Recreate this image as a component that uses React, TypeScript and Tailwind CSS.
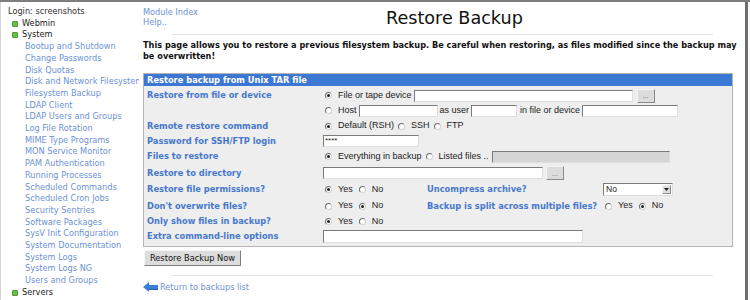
import React from 'react';

const dv = "font-['DejaVu_Sans',sans-serif]";
const lib = "font-['Liberation_Sans',Arial,sans-serif]";

const systemItems = [
  'Bootup and Shutdown',
  'Change Passwords',
  'Disk Quotas',
  'Disk and Network Filesystems',
  'Filesystem Backup',
  'LDAP Client',
  'LDAP Users and Groups',
  'Log File Rotation',
  'MIME Type Programs',
  'MON Service Monitor',
  'PAM Authentication',
  'Running Processes',
  'Scheduled Commands',
  'Scheduled Cron Jobs',
  'Security Sentries',
  'Software Packages',
  'SysV Init Configuration',
  'System Documentation',
  'System Logs',
  'System Logs NG',
  'Users and Groups',
];

const Radio = ({ on }: { on?: boolean }) => (
  <span className="relative inline-block w-[7px] h-[7px] shrink-0 rounded-full border border-t-[#6b6b6b] border-l-[#6b6b6b] border-r-[#d4d4d4] border-b-[#d4d4d4] bg-white">
    {on && <span className="absolute left-[1px] top-[1px] w-[3px] h-[3px] rounded-full bg-[#1f1f1f]" />}
  </span>
);

const Opt = ({ on, label, className = '' }: { on?: boolean; label: string; className?: string }) => (
  <span className={`flex items-center ${className}`}>
    <Radio on={on} />
    <span className="ml-[6px] whitespace-nowrap">{label}</span>
  </span>
);

const Field = ({ className = '', children }: { className?: string; children?: React.ReactNode }) => (
  <span
    className={`inline-flex items-center h-[12px] shrink-0 border border-t-[#7a7a7a] border-l-[#7a7a7a] border-r-[#dedede] border-b-[#dedede] ${className}`}
  >
    {children}
  </span>
);

const Dots = ({ className = '' }: { className?: string }) => (
  <span
    className={`inline-flex items-center justify-center w-[18px] h-[14px] shrink-0 bg-[#dcdcdc] border border-t-[#f4f4f4] border-l-[#f4f4f4] border-r-[#8a8a8a] border-b-[#8a8a8a] text-[7px] leading-none text-[#555] ${className}`}
  >
    ...
  </span>
);

const Label = ({ children, className = 'w-[176px]' }: { children: React.ReactNode; className?: string }) => (
  <span className={`shrink-0 font-bold text-[#4678cc] text-[8.3px] ${dv} whitespace-nowrap ${className}`}>{children}</span>
);

const Sidebar = () => (
  <div className={`w-[139px] shrink-0 h-full border-l border-[#d4d4d4] pt-[4px] pl-[7px] ${dv} text-[8.2px] leading-[11.7px] overflow-hidden`}>
    <div className="text-[#333]">Login: screenshots</div>
    <div className="flex items-center pl-[4px] text-[#222]">
      <span className="w-[6px] h-[6px] rounded-[1px] bg-[#6cbf4a] border border-[#4c9a33]" />
      <span className="ml-[4px]">Webmin</span>
    </div>
    <div className="flex items-center pl-[4px] text-[#222]">
      <span className="w-[6px] h-[6px] rounded-[1px] bg-[#6cbf4a] border border-[#4c9a33]" />
      <span className="ml-[4px]">System</span>
    </div>
    {systemItems.map((s) => (
      <div key={s} className="pl-[17px] text-[#6d92d6] whitespace-nowrap">
        {s}
      </div>
    ))}
    <div className="flex items-center pl-[4px] text-[#222]">
      <span className="w-[6px] h-[6px] rounded-[1px] bg-[#6cbf4a] border border-[#4c9a33]" />
      <span className="ml-[4px]">Servers</span>
    </div>
  </div>
);

const RestoreForm = () => (
  <div className="w-[590px] border border-[#b4b4b4] bg-[#eeeeee]">
    <div className={`h-[12px] bg-[#3c77d4] pl-[3px] flex items-center text-white font-bold text-[8.3px] ${dv}`}>
      Restore backup from Unix TAR file
    </div>
    <div className={`pt-[2px] pb-[2px] pl-[3px] text-[9px] text-[#222] ${lib}`}>
      {/* restore from */}
      <div className="h-[30px] flex">
        <div className="h-[15px] flex items-center">
          <Label>Restore from file or device</Label>
        </div>
        <div className="flex flex-col">
          <div className="h-[15px] flex items-center">
            <Opt on label="File or tape device" className="ml-[2px]" />
            <Field className="ml-[2px] w-[219px] bg-white" />
            <Dots className="ml-[4px]" />
          </div>
          <div className="h-[15px] flex items-center">
            <Opt label="Host" className="ml-[2px]" />
            <Field className="ml-[2px] w-[79px] bg-white" />
            <span className="ml-[2px] whitespace-nowrap">as user</span>
            <Field className="ml-[2px] w-[46px] bg-white" />
            <span className="ml-[3px] whitespace-nowrap">in file or device</span>
            <Field className="ml-[2px] w-[96px] bg-white" />
          </div>
        </div>
      </div>
      <div className="h-[16px] flex items-center">
        <Label>Remote restore command</Label>
        <Opt on label="Default (RSH)" className="ml-[2px]" />
        <Opt label="SSH" className="ml-[4px]" />
        <Opt label="FTP" className="ml-[4px]" />
      </div>
      <div className="h-[14px] flex items-center">
        <Label>Password for SSH/FTP login</Label>
        <Field className="w-[96px] bg-white pl-[1px] text-[8px] leading-none">****</Field>
      </div>
      <div className="h-[17px] flex items-center">
        <Label>Files to restore</Label>
        <Opt on label="Everything in backup" className="ml-[2px]" />
        <Opt label="Listed files .." className="ml-[4px]" />
        <Field className="ml-[3px] w-[178px] bg-[#d6d6d6]" />
      </div>
      <div className="h-[16px] flex items-center">
        <Label>Restore to directory</Label>
        <Field className="w-[220px] bg-white" />
        <Dots className="ml-[3px]" />
      </div>
      <div className="h-[17px] flex items-center">
        <Label>Restore file permissions?</Label>
        <div className="w-[104px] flex items-center">
          <Opt on label="Yes" className="ml-[2px]" />
          <Opt label="No" className="ml-[6px]" />
        </div>
        <Label className="w-[176px]">Uncompress archive?</Label>
        <span className="w-[70px] h-[13px] flex items-center bg-white border border-t-[#7a7a7a] border-l-[#7a7a7a] border-r-[#dedede] border-b-[#dedede]">
          <span className="flex-1 pl-[2px] text-[8.5px]">No</span>
          <span className="w-[9px] h-[9px] mr-[1px] flex items-center justify-center bg-[#dedede] border border-t-[#f4f4f4] border-l-[#f4f4f4] border-r-[#8a8a8a] border-b-[#8a8a8a]">
            <svg width="5" height="3" viewBox="0 0 5 3">
              <path d="M0 0h5L2.5 3z" fill="#222" />
            </svg>
          </span>
        </span>
      </div>
      <div className="h-[16px] flex items-center">
        <Label>Don't overwrite files?</Label>
        <div className="w-[104px] flex items-center">
          <Opt label="Yes" className="ml-[2px]" />
          <Opt on label="No" className="ml-[6px]" />
        </div>
        <Label className="w-[178px]">Backup is split across multiple files?</Label>
        <Opt label="Yes" />
        <Opt on label="No" className="ml-[6px]" />
      </div>
      <div className="h-[15px] flex items-center">
        <Label>Only show files in backup?</Label>
        <Opt on label="Yes" className="ml-[2px]" />
        <Opt label="No" className="ml-[6px]" />
      </div>
      <div className="h-[15px] flex items-center">
        <Label>Extra command-line options</Label>
        <Field className="w-[260px] h-[13px] bg-white" />
      </div>
    </div>
  </div>
);

export default function App() {
  return (
    <div className="w-[750px] h-[300px] overflow-hidden bg-white border-t-2 border-[#7d7d7d] flex">
      <Sidebar />
      <div className="w-[606px] shrink-0 h-full pl-[4px] pt-[5px]">
        <div className="flex items-start">
          <div className={`w-[243px] shrink-0 ${dv} text-[8.2px] leading-[10px] text-[#6d92d6]`}>
            <div>Module Index</div>
            <div>Help..</div>
          </div>
          <h1 className={`${dv} text-[17.6px] leading-[22px] text-[#111] whitespace-nowrap`}>Restore Backup</h1>
        </div>
        <div className="mt-[5px] ml-[29px] w-[541px] h-px bg-[#e4e4e4]" />
        <p className={`mt-[5px] pr-[2px] font-bold text-[8.2px] leading-[11px] text-[#111] ${dv}`}>
          This page allows you to restore a previous filesystem backup. Be careful when restoring, as files modified since the backup may be overwritten!
        </p>
        <div className="mt-[11px]">
          <RestoreForm />
        </div>
        <button
          className={`block mt-[3px] ml-[1px] h-[16px] w-[97px] bg-[#dddddd] border border-t-[#f6f6f6] border-l-[#f6f6f6] border-r-[#7f7f7f] border-b-[#7f7f7f] text-[8.3px] text-[#111] leading-none ${dv}`}
        >
          Restore Backup Now
        </button>
        <div className="mt-[9px] ml-[29px] w-[541px] h-px bg-[#e4e4e4]" />
        <div className="mt-[5px] h-[12px] flex items-center">
          <svg width="15" height="10" viewBox="0 0 15 10">
            <path d="M0 5L6 0v3h9v4H6v3z" fill="#3c7fd8" />
            <path d="M6 7h9v1H6v2z" fill="#2a5fae" />
          </svg>
          <span className={`ml-[2px] text-[8.2px] text-[#6d92d6] ${dv}`}>Return to backups list</span>
        </div>
      </div>
      <div className="w-[3px] h-full bg-[#6e6e6e]" />
    </div>
  );
}
